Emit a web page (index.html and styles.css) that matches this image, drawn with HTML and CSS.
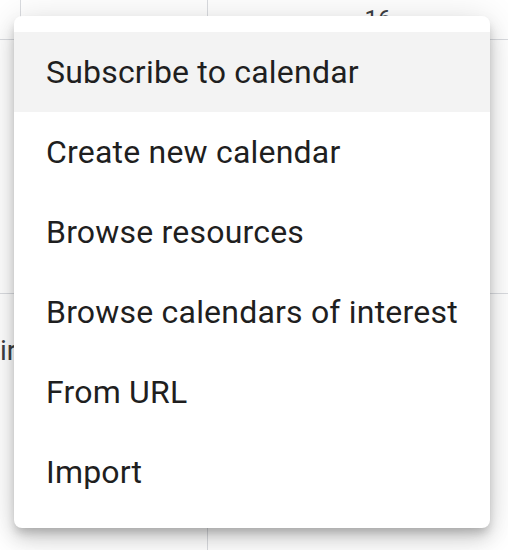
FILE: index.html
```html
<!DOCTYPE html>
<html lang="en">
<head>
<meta charset="utf-8">
<title>Add calendar menu</title>
<link rel="stylesheet" href="styles.css">
</head>
<body>
<div class="calendar">
  <div class="head-row">
    <div class="cell gutter"></div>
    <div class="cell col-a"></div>
    <div class="cell col-b"><span class="day-num">16</span></div>
  </div>
  <div class="week-row">
    <div class="cell wide-a"></div>
    <div class="cell col-b"></div>
  </div>
  <div class="week-row last">
    <div class="cell wide-a"><span class="event-text">ir</span></div>
    <div class="cell col-b"></div>
  </div>
</div>

<ul class="menu" role="menu">
  <li class="menu-item active" role="menuitem">Subscribe to calendar</li>
  <li class="menu-item" role="menuitem">Create new calendar</li>
  <li class="menu-item" role="menuitem">Browse resources</li>
  <li class="menu-item" role="menuitem">Browse calendars of interest</li>
  <li class="menu-item" role="menuitem">From URL</li>
  <li class="menu-item" role="menuitem">Import</li>
</ul>
</body>
</html>
```

FILE: styles.css
```css
html, body {
  margin: 0;
  padding: 0;
  background: #ffffff;
  font-family: Roboto, "Liberation Sans", Arial, sans-serif;
  overflow: hidden;
}

body {
  width: 508px;
  height: 550px;
  position: relative;
}

.calendar {
  display: flex;
  flex-direction: column;
  height: 550px;
}

.head-row {
  display: flex;
  height: 40px;
  border-bottom: 1px solid #dadce0;
  box-sizing: border-box;
}

.cell {
  box-sizing: border-box;
}

.gutter {
  width: 21px;
  border-right: 1px solid #dadce0;
}

.col-a {
  width: 187px;
  border-right: 1px solid #dadce0;
}

.col-b {
  flex: 1;
  display: flex;
  justify-content: center;
  padding-left: 40px;
}

.day-num {
  font-size: 24px;
  line-height: 1;
  color: #3c4043;
  padding-top: 7px;
}

.week-row {
  display: flex;
  height: 254px;
  border-bottom: 1px solid #dadce0;
  box-sizing: border-box;
}

.week-row.last {
  flex: 1;
  border-bottom: none;
}

.wide-a {
  width: 208px;
  border-right: 1px solid #dadce0;
}

.event-text {
  display: block;
  font-size: 28px;
  line-height: 28px;
  color: #3c4043;
  padding-top: 43px;
  padding-left: 0;
}

.menu {
  position: absolute;
  left: 14px;
  top: 16px;
  width: 476px;
  margin: 0;
  padding: 16px 0;
  list-style: none;
  background: #ffffff;
  border-radius: 8px;
  box-shadow: 0 6px 10px -2px rgba(0, 0, 0, 0.2),
              0 12px 20px 0 rgba(0, 0, 0, 0.14),
              0 2px 36px 0 rgba(0, 0, 0, 0.12);
}

.menu-item {
  height: 80px;
  line-height: 80px;
  padding: 0 32px;
  font-size: 32px;
  letter-spacing: 0.2px;
  color: #1f1f1f;
  white-space: nowrap;
}

.menu-item.active {
  background: #f3f3f3;
}
```
